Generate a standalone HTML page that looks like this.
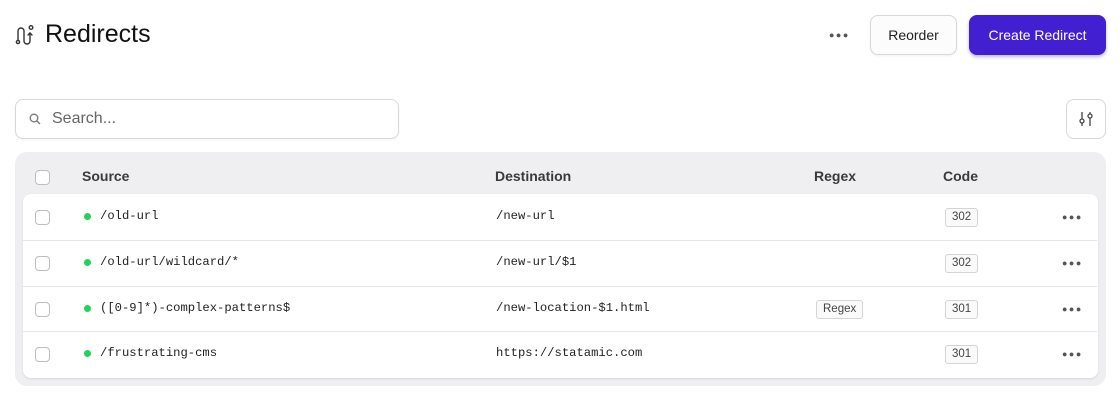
<!DOCTYPE html>
<html><head><style>
*{box-sizing:border-box;margin:0;padding:0}
body{width:1120px;height:400px;background:#fff;font-family:"Liberation Sans",sans-serif;color:#111;position:relative;overflow:hidden}
.a{position:absolute}
.btn{position:absolute;border-radius:8px;display:flex;align-items:center;justify-content:center;font-size:14px}
.cb{position:absolute;width:15px;height:15px;border:1.5px solid #bdbdc2;border-radius:4px;background:#fff}
.mono{font-family:"Liberation Mono",monospace;font-size:12.2px;color:#222}
.dot{position:absolute;width:7px;height:7px;border-radius:50%;background:#22d35a}
.badge{position:absolute;border:1px solid #d4d4d8;border-radius:3px;font-size:11.5px;color:#444;padding:2px 6px;background:#fafafa;line-height:13px}
.dots{position:absolute;font-size:9px;letter-spacing:1.5px;color:#555}
.sep{position:absolute;left:23px;width:1074px;height:1px;background:#e6e6ea}
.h{position:absolute;font-size:14px;font-weight:bold;color:#3a3a3a}
</style></head><body>
<svg class="a" style="left:15px;top:24px" width="22" height="22" viewBox="0 0 22 22" fill="none" stroke="#333" stroke-width="1.4" stroke-linecap="round"><circle cx="3" cy="18" r="1.6"/><path d="M3 16V7a3 3 0 0 1 6 0v10a3 3 0 0 0 6 0V9"/><circle cx="16" cy="3.5" r="1.8"/><path d="M13 11l2-2 2 2"/></svg>
<div class="a" style="left:45px;top:20px;font-size:25px;color:#111">Redirects</div>
<div class="dots" style="left:829px;top:30px">●●●</div>
<div class="btn" style="left:870px;top:15px;width:87px;height:40px;border:1px solid #d8d8dc;background:#fcfcfc;color:#222;box-shadow:0 1px 2px rgba(0,0,0,.06)">Reorder</div>
<div class="btn" style="left:969px;top:15px;width:137px;height:40px;background:#4220d2;color:#fff;box-shadow:0 2px 3px rgba(40,20,140,.3)">Create Redirect</div>
<div class="a" style="left:15px;top:99px;width:384px;height:40px;border:1px solid #d8d8dc;border-radius:8px;box-shadow:0 1px 2px rgba(0,0,0,.05)"></div>
<svg class="a" style="left:29px;top:113px" width="12" height="12" viewBox="0 0 12 12" fill="none" stroke="#777" stroke-width="1.3"><circle cx="5" cy="5" r="3.8"/><path d="M8 8l3 3"/></svg>
<div class="a" style="left:52px;top:110px;font-size:16px;color:#666">Search...</div>
<div class="a" style="left:1066px;top:99px;width:40px;height:40px;border:1px solid #d8d8dc;border-radius:8px"></div>
<svg class="a" style="left:1076px;top:109px" width="20" height="20" viewBox="0 0 20 20" fill="none" stroke="#444" stroke-width="1.3"><path d="M6 3v7M6 14v3M14 3v2M14 9v8"/><circle cx="6" cy="12" r="2"/><circle cx="14" cy="7" r="2"/></svg>
<div class="a" style="left:15px;top:152px;width:1091px;height:234px;background:#efeff1;border-radius:12px"></div>
<div class="cb" style="left:35px;top:170px"></div>
<div class="h" style="left:82px;top:168px">Source</div>
<div class="h" style="left:495px;top:168px">Destination</div>
<div class="h" style="left:814px;top:168px">Regex</div>
<div class="h" style="left:943px;top:168px">Code</div>
<div class="a" style="left:23px;top:194px;width:1075px;height:184px;background:#fff;border-radius:8px;box-shadow:0 1px 2px rgba(0,0,0,.1)"></div>
<div class="sep" style="top:240px"></div><div class="sep" style="top:286px"></div><div class="sep" style="top:331px"></div>

<div class="cb" style="left:35px;top:210px"></div><div class="dot" style="left:84px;top:213px"></div>
<div class="a mono" style="left:100px;top:209px">/old-url</div>
<div class="a mono" style="left:496px;top:209px">/new-url</div>
<div class="badge" style="left:945px;top:208px">302</div><div class="dots" style="left:1062px;top:212px">●●●</div>

<div class="cb" style="left:35px;top:256px"></div><div class="dot" style="left:84px;top:259px"></div>
<div class="a mono" style="left:100px;top:255px">/old-url/wildcard/*</div>
<div class="a mono" style="left:496px;top:255px">/new-url/$1</div>
<div class="badge" style="left:945px;top:254px">302</div><div class="dots" style="left:1062px;top:258px">●●●</div>

<div class="cb" style="left:35px;top:302px"></div><div class="dot" style="left:84px;top:305px"></div>
<div class="a mono" style="left:100px;top:301px">([0-9]*)-complex-patterns$</div>
<div class="a mono" style="left:496px;top:301px">/new-location-$1.html</div>
<div class="badge" style="left:816px;top:300px">Regex</div>
<div class="badge" style="left:945px;top:300px">301</div><div class="dots" style="left:1062px;top:304px">●●●</div>

<div class="cb" style="left:35px;top:347px"></div><div class="dot" style="left:84px;top:350px"></div>
<div class="a mono" style="left:100px;top:346px">/frustrating-cms</div>
<div class="a mono" style="left:496px;top:346px">https://statamic.com</div>
<div class="badge" style="left:945px;top:345px">301</div><div class="dots" style="left:1062px;top:349px">●●●</div>
</body></html>
